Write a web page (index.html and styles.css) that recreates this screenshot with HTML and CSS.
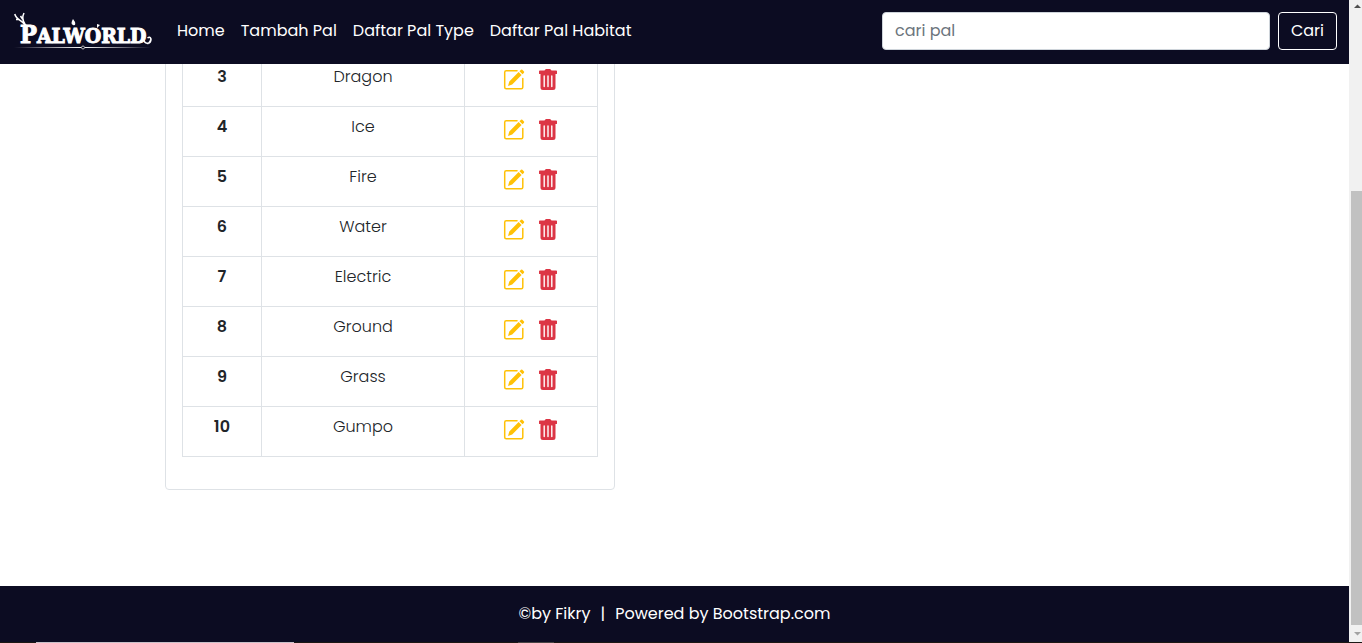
FILE: index.html
```html
<!DOCTYPE html>
<html lang="id">
<head>
<meta charset="utf-8">
<title>Daftar Pal Type</title>
<link rel="stylesheet" href="styles.css">
</head>
<body>
<svg class="defs" aria-hidden="true">
  <symbol id="edit" viewBox="0 0 22 22">
    <path d="M14 1.700H3.200Q1.700 1.700 1.700 3.200V18.300Q1.700 19.800 3.200 19.800H18.300Q19.800 19.800 19.800 18.300V9.500" fill="none" stroke="currentColor" stroke-width="1.500" stroke-linecap="round"/>
    <path d="M15.600 3.100 18.600 6.100 9.200 15.500 5 16.900 6.300 12.500ZM16.500 2.200 18 .7Q18.700.3 19.300.8L21 2.500Q21.400 3.100 21 3.700L19.500 5.200Z" fill="currentColor"/>
  </symbol>
  <symbol id="trash" viewBox="0 0 18 22">
    <path fill="currentColor" fill-rule="evenodd" d="M0 2.300Q0 1.500.8 1.500H5.500L6.300.5Q6.600 0 7.200 0H10.800Q11.400 0 11.700.5L12.500 1.500H17.200Q18 1.500 18 2.300V4.500Q18 5 17.500 5H16.500V18.500Q16.500 21 14 21H4Q1.500 21 1.500 18.500V5H.5Q0 5 0 4.500ZM4.500 7V17.500Q4.500 18.300 5.200 18.300T5.900 17.500V7Q5.900 6.300 5.200 6.300T4.500 7ZM8.300 7V17.500Q8.300 18.300 9 18.300T9.700 17.500V7Q9.700 6.300 9 6.300T8.300 7ZM12.100 7V17.500Q12.100 18.300 12.800 18.300T13.500 17.500V7Q13.500 6.300 12.800 6.300T12.100 7Z"/>
  </symbol>
</svg>
<div class="page">
  <header class="navbar">
    <a class="brand" href="#" aria-label="Palworld">
      <svg class="logo" viewBox="0 0 140 40">
        <defs>
          <linearGradient id="rule"><stop offset="0" stop-color="#fff" stop-opacity="0"/><stop offset=".5" stop-color="#fff"/><stop offset="1" stop-color="#fff" stop-opacity="0"/></linearGradient>
        </defs>
        <text class="logo-text" x="6" y="32"><tspan class="logo-cap">P</tspan>ALWORLD</text>
        <path d="M11 14C8 9 2 9 .8 3M4.500 8.500 2 8.500M11 13C8 9 8 6 10 2M8.500 8 6.500 5M13 15 7 10M130 29C130 33 137 34 137 28Q136 25 133.500 27M131 31Q135 35 137 28" fill="none" stroke="#fff" stroke-width="1.500"/>
        <path d="M59 8Q56 13 59 14T61 11ZM83 13 86 14 83 17Z" fill="#fff"/>
        <path d="M0 36H137V37H0Z" fill="url(#rule)"/>
        <circle cx="69" cy="36.500" r="1.500" fill="#0b0b23" stroke="#bbb"/>
      </svg>
    </a>
    <nav class="links"><a href="#">Home</a><a href="#">Tambah Pal</a><a href="#">Daftar Pal Type</a><a href="#">Daftar Pal Habitat</a></nav>
    <form class="search">
      <input type="search" placeholder="cari pal" aria-label="cari pal">
      <button type="button">Cari</button>
    </form>
  </header>
  <main class="content">
    <section class="card">
      <table class="types">
        <colgroup><col class="col-no"><col class="col-name"><col class="col-action"></colgroup>
        <tbody id="rows"></tbody>
      </table>
    </section>
  </main>
  <footer class="footer"><span>©by Fikry</span><span>|</span><span>Powered by Bootstrap.com</span></footer>
</div>
<div class="scrollbar" aria-hidden="true">
  <svg class="arrow" viewBox="0 0 13 17"><path d="M5 8 8.500 4.500 12 8Z" fill="#505050"/></svg>
  <div class="track"><div class="thumb"></div></div>
  <svg class="arrow" viewBox="0 0 13 17"><path d="M5 7 8.500 10.500 12 7Z" fill="#a3a3a3"/></svg>
</div>
<div class="taskbar" aria-hidden="true"><div class="task"></div><div class="task-dim"></div></div>
<script src="rows.js"></script>
</body>
</html>
```
FILE: styles.css
```css
* { box-sizing: border-box; }
body {
  margin: 0;
  height: 100vh;
  display: grid;
  grid-template-columns: 1fr 13px;
  grid-template-rows: 1fr 1px;
  overflow: hidden;
  background: #fff;
  color: #212529;
  font: 16px/24px Poppins, Inter, "Open Sans", sans-serif;
}
a { color: inherit; text-decoration: none; }
.defs { position: absolute; width: 0; height: 0; }
.page { display: flex; flex-direction: column; min-height: 0; }
.navbar {
  display: flex;
  align-items: center;
  flex: none;
  height: 64px;
  padding: 0 12px 2px 14px;
  background: #0c0c22;
  color: #fff;
}
.brand { display: flex; margin-right: 23px; }
.logo { width: 140px; height: 40px; }
.logo-text {
  font: condensed bold 21px "DejaVu Serif", "DejaVu Serif Condensed", serif;
  fill: #fff;
  stroke: #fff;
  stroke-width: 1px;
}
.logo-cap { font-size: 25px; }
.links { display: flex; gap: 16px; white-space: nowrap; }
.search { display: flex; gap: 8px; width: 455px; margin-left: auto; }
.search input {
  flex: 1;
  min-width: 0;
  height: 38px;
  padding: 4px 12px 6px;
  border: 1px solid #ced4da;
  border-radius: 4px;
  background: #fff;
  font: inherit;
  appearance: none;
}
.search input::placeholder { color: #6c757d; opacity: 1; }
.search button {
  height: 38px;
  padding: 0 12px;
  border: 1px solid #fff;
  border-radius: 4px;
  background: transparent;
  color: #fff;
  font: inherit;
}
.content {
  flex: 1;
  min-height: 0;
  display: flex;
  flex-direction: column;
  justify-content: flex-end;
  overflow: hidden;
  padding: 0 165px 96px;
}
.card {
  flex: none;
  width: 450px;
  padding: 16px;
  border: 1px solid #dee2e6;
  border-radius: 4px;
}
.types {
  width: 100%;
  margin-bottom: 16px;
  table-layout: fixed;
  border-collapse: collapse;
  text-align: center;
}
.col-no { width: 19%; }
.col-name { width: 49%; }
.col-action { width: 32%; }
.types th, .types td {
  height: 50px;
  padding: 8px;
  border: 1px solid #dee2e6;
  vertical-align: top;
}
.types th { font-weight: 600; }
.types td { font-weight: 300; }
.actions { display: flex; justify-content: center; gap: 14px; padding: 4px 2px 0 0; }
.actions a { display: flex; }
.edit { color: #ffc107; }
.trash { color: #dc3545; }
.edit svg { width: 22px; height: 22px; }
.trash svg { width: 18px; height: 22px; }
.footer {
  flex: none;
  display: flex;
  justify-content: center;
  gap: 10px;
  padding: 16px;
  background: #0c0c22;
  color: #fff;
}
.scrollbar { display: flex; flex-direction: column; background: #f1f1f1; }
.arrow { width: 13px; height: 17px; }
.track { flex: 1; display: flex; align-items: flex-end; padding-left: 2px; }
.thumb { width: 100%; height: 71.4%; background: #c1c1c1; }
.taskbar { grid-column: 1 / -1; display: flex; background: #1c1714; }
.task { width: 258px; margin-left: 36px; background: #c8c0c8; }
.task-dim { width: 36px; margin-left: 224px; background: #484444; }
```
FILE: rows.js
```js
const types = ["Dragon", "Ice", "Fire", "Water", "Electric", "Ground", "Grass", "Gumpo"];
document.getElementById("rows").innerHTML = types.map((name, i) => `
  <tr>
    <th scope="row">${i + 3}</th>
    <td>${name}</td>
    <td><div class="actions">
      <a class="edit" href="#" aria-label="Edit ${name}"><svg><use href="#edit"/></svg></a>
      <a class="trash" href="#" aria-label="Hapus ${name}"><svg><use href="#trash"/></svg></a>
    </div></td>
  </tr>`).join("");
```
